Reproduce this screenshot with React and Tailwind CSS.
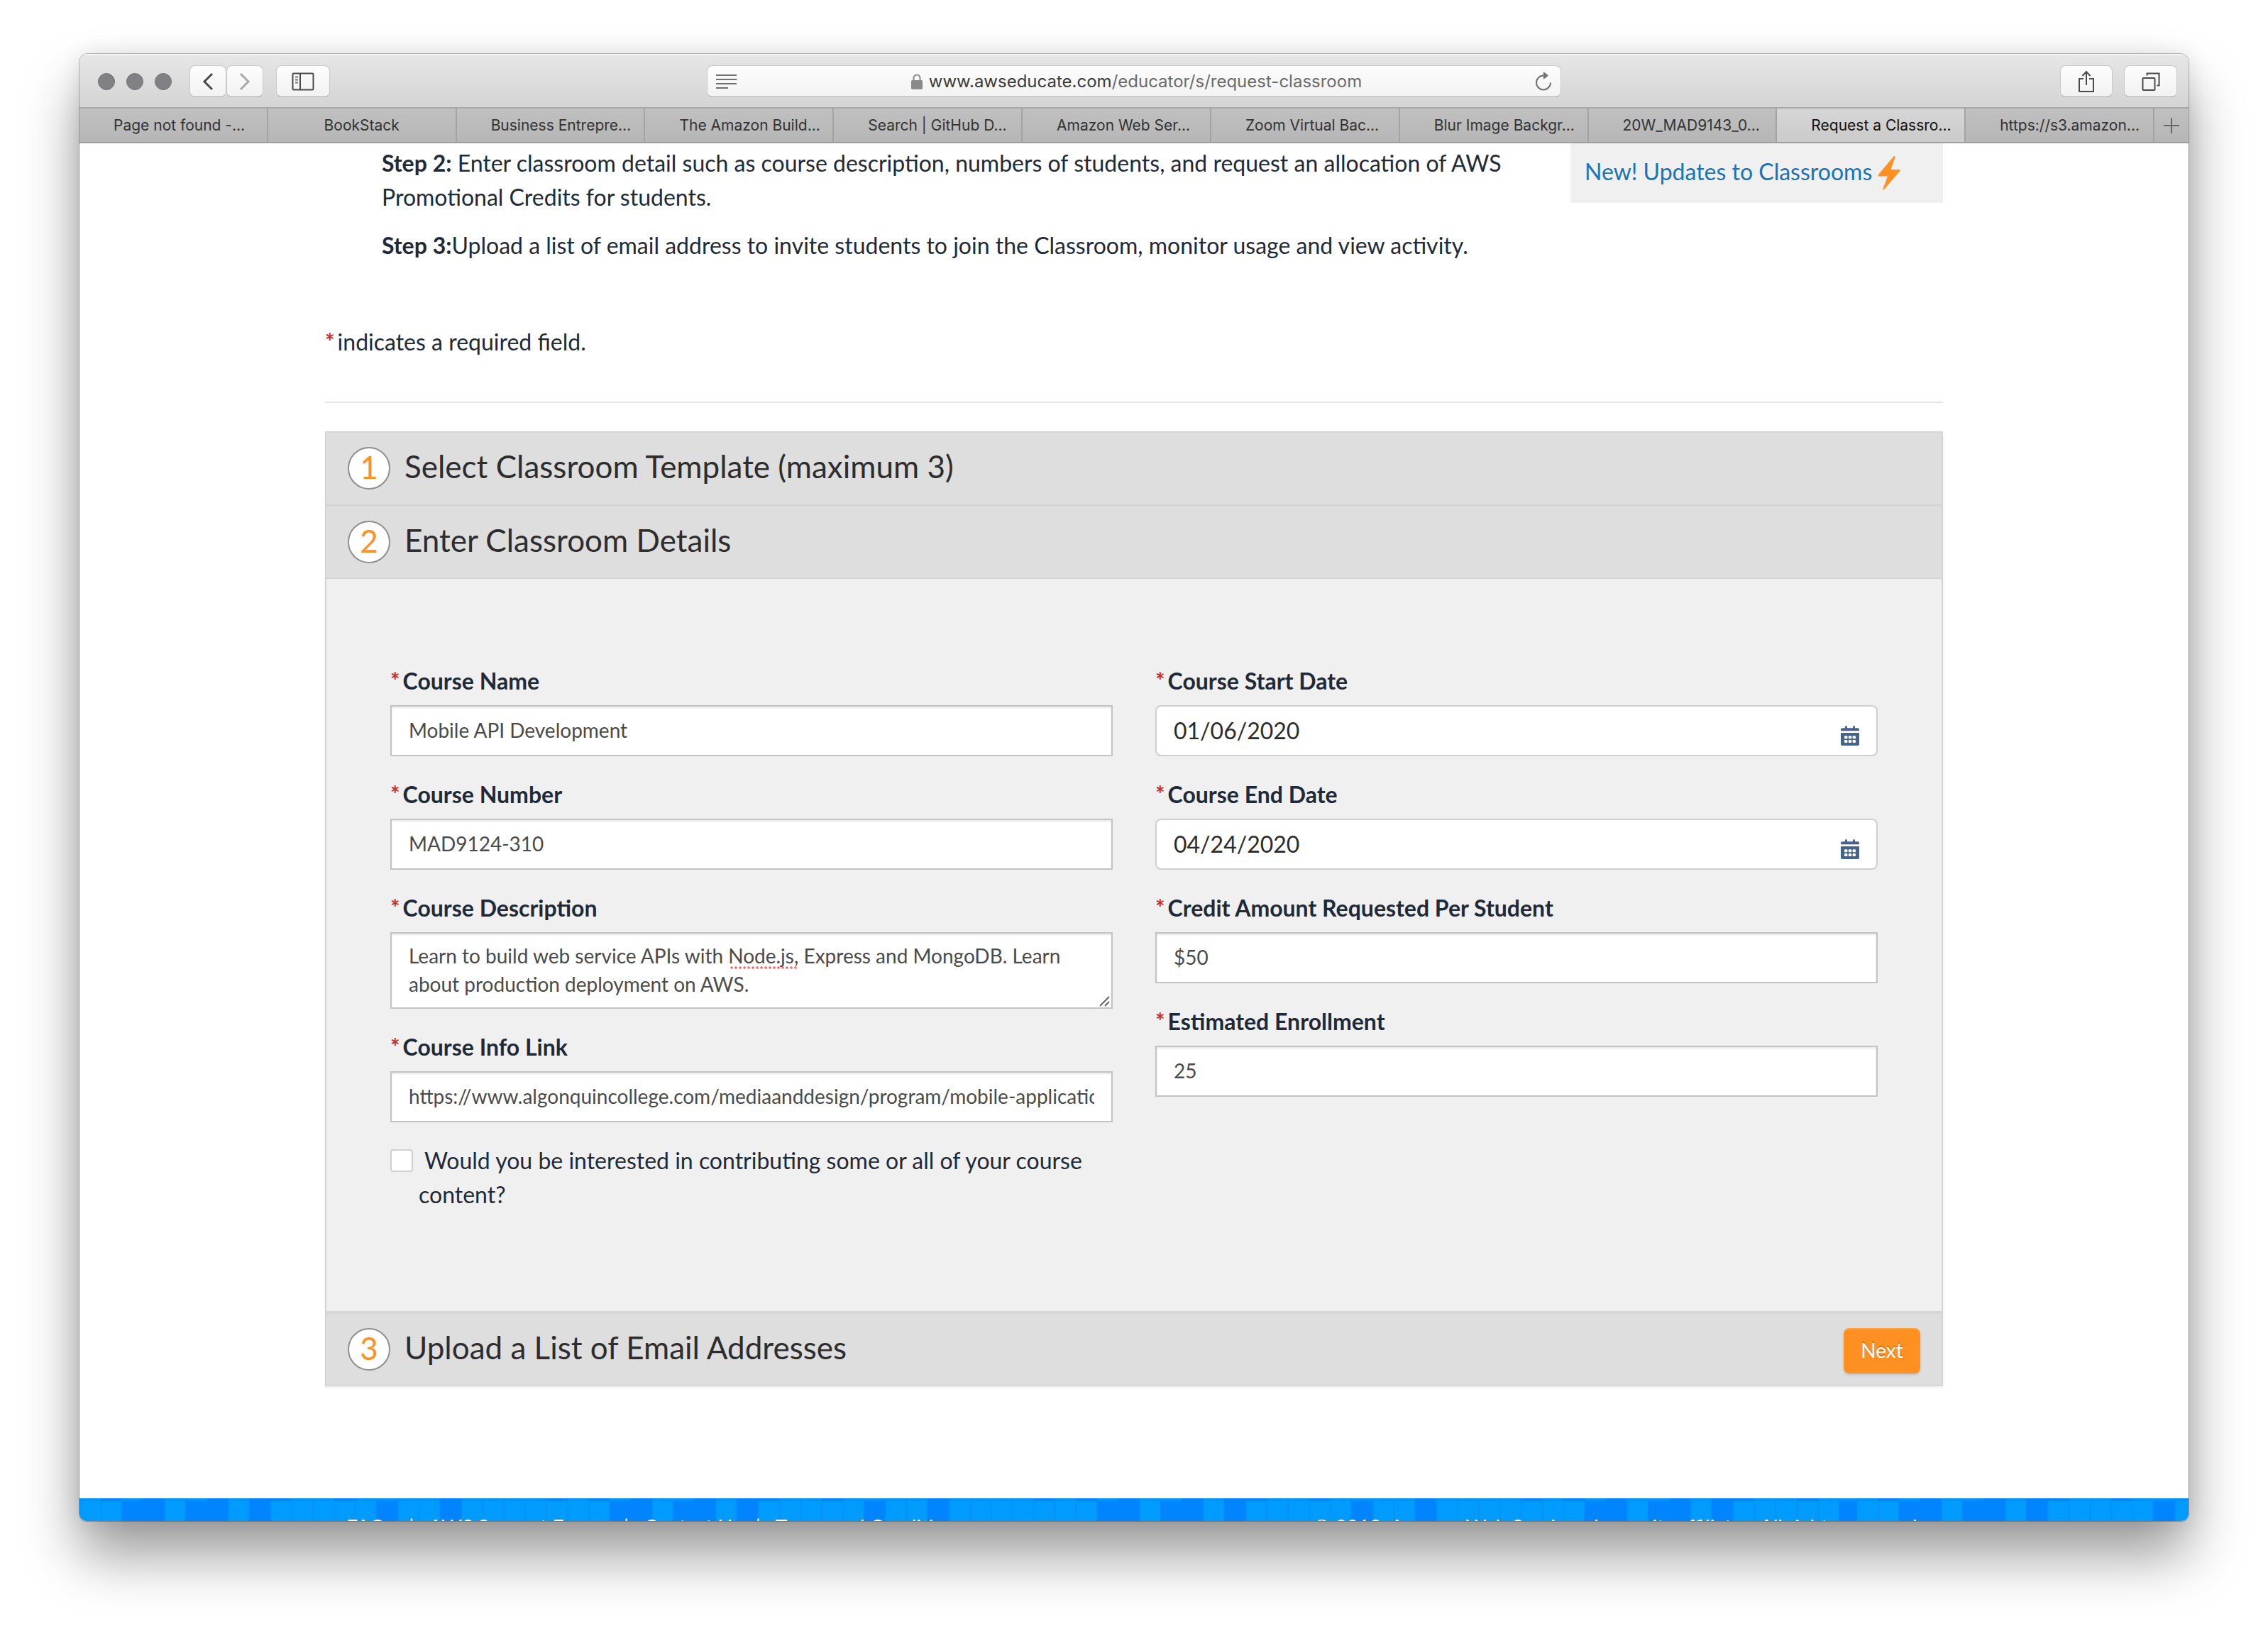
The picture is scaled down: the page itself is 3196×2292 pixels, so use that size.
import React from "react";

const TILE = 29.87;
const STRIP = 2504;
const DARK_TOP = [1, 3, 6, 8, 9, 12, 17, 22];
const DARK = [2, 3, 5, 6, 8, 14, 17];

const TABS = [
  "Page not found -...",
  "BookStack",
  "Business Entrepre...",
  "The Amazon Build...",
  "Search | GitHub D...",
  "Amazon Web Ser...",
  "Zoom Virtual Bac...",
  "Blur Image Backgr...",
  "20W_MAD9143_0...",
  "Request a Classro...",
  "https://s3.amazon...",
];

const toolButton =
  "flex h-[45px] items-center justify-center rounded-lg border border-[#c9c9c9] border-b-[#a6a6a6] bg-linear-to-b from-[#fdfdfd] to-[#f2f2f2]";

function Toolbar() {
  return (
    <div className="grid h-[75px] grid-cols-[1fr_auto_1fr] items-center border-t-2 border-[#f4f4f4] bg-linear-to-b from-[#e6e6e6] to-[#d4d4d4]">
      <div className="flex items-center pl-[26px]">
        <div className="flex gap-4">
          {[0, 1, 2].map((i) => (
            <span key={i} className="size-6 rounded-full border border-[#74747a] bg-[#808085]" />
          ))}
        </div>
        <div className="ml-[25px] flex">
          <button aria-label="Back" className={`${toolButton} w-[52px]`}>
            <svg width="16" height="26" viewBox="0 0 16 26" fill="none" stroke="#4a4a4a" strokeWidth="3">
              <path d="M14 2 3 13l11 11" />
            </svg>
          </button>
          <button aria-label="Forward" className={`${toolButton} w-[52px]`}>
            <svg width="16" height="26" viewBox="0 0 16 26" fill="none" stroke="#a9a9a9" strokeWidth="3">
              <path d="m2 2 11 11L2 24" />
            </svg>
          </button>
        </div>
        <button aria-label="Show sidebar" className={`${toolButton} ml-[18px] w-[76px]`}>
          <svg width="32" height="26" viewBox="0 0 32 26" fill="none" stroke="#4a4a4a" strokeWidth="2">
            <rect x="1.5" y="1.5" width="29" height="23" rx="1.5" />
            <path d="M12 2v22" />
            <path d="M5 6.500h4M5 10.500h4M5 14.500h4" stroke="#777" />
          </svg>
        </button>
      </div>
      <div className="flex h-[45px] w-[1204px] items-center rounded-lg border border-[#c9c9c9] border-b-[#a6a6a6] bg-linear-to-b from-[#fdfdfd] to-[#f3f3f3] px-3">
        <svg width="30" height="22" viewBox="0 0 30 22" stroke="#6f6f6f" strokeWidth="2">
          <path d="M0 2h29M0 8h29M0 14h29M0 20h17" />
        </svg>
        <div className="flex flex-1 items-center justify-center gap-2">
          <svg width="18" height="22" viewBox="0 0 18 22">
            <rect x="1" y="9" width="16" height="13" rx="1.500" fill="#8a8a8a" />
            <path d="M4.500 10V6a4.500 4.500 0 0 1 9 0v4" fill="none" stroke="#8a8a8a" strokeWidth="2" />
          </svg>
          <span className="text-2xl text-[#6b6b6b]">
            <span className="text-[#3b3b3b]">www.awseducate.com</span>/educator/s/request-classroom
          </span>
        </div>
        <button aria-label="Reload">
          <svg width="24" height="28" viewBox="0 0 24 28" fill="none" stroke="#707070" strokeWidth="2">
            <path d="M12 5.500a10 10 0 1 0 10 10" />
            <path d="M12 0v11l7-5.500z" fill="#707070" stroke="none" />
          </svg>
        </button>
      </div>
      <div className="flex justify-end gap-4 pr-4">
        <button aria-label="Share" className={`${toolButton} w-[74px]`}>
          <svg width="26" height="32" viewBox="0 0 26 32" fill="none" stroke="#4a4a4a" strokeWidth="2">
            <path d="M9 12H3v18h20V12h-6" />
            <path d="M13 21V2M7.500 8 13 2l5.500 6" />
          </svg>
        </button>
        <button aria-label="Show all tabs" className={`${toolButton} w-[75px]`}>
          <svg width="26" height="26" viewBox="0 0 26 26" fill="none" stroke="#4a4a4a" strokeWidth="2">
            <rect x="1.500" y="8" width="17" height="17" rx="1" />
            <path d="M7.500 4.500V1.500h17v17h-3" />
          </svg>
        </button>
      </div>
    </div>
  );
}

function TabBar() {
  return (
    <nav className="flex h-[51px] border-y-2 border-t-[#a8a8a8] border-b-[#a0a0a0] bg-linear-to-b from-[#c0c0c0] to-[#b6b6b6] text-[21px] text-[#333]">
      <div className="grid flex-1 grid-cols-11">
        {TABS.map((name) => {
          const place = name === "BookStack" ? "text-center" : "pl-12 text-left";
          const active = name.startsWith("Request") ? "bg-linear-to-b from-[#d6d6d6] to-[#cbcbcb] text-[#111]" : "";
          return (
            <button
              key={name}
              className={`min-w-0 overflow-hidden border-r-2 border-[#a3a3a3] whitespace-nowrap ${place} ${active}`}
            >
              {name}
            </button>
          );
        })}
      </div>
      <button aria-label="New tab" className="flex w-12 items-center justify-center">
        <svg width="22" height="22" viewBox="0 0 22 22" stroke="#666" strokeWidth="2">
          <path d="M11 0v22M0 11h22" />
        </svg>
      </button>
    </nav>
  );
}

function Star() {
  return <span className="mr-1 font-bold text-[#c23030]">*</span>;
}

function Field({ id, label, children }) {
  return (
    <div>
      <label htmlFor={id} className="mb-2.5 block font-bold">
        <Star />
        {label}
      </label>
      {children}
    </div>
  );
}

const box =
  "block w-full border-2 border-[#c3c3c3] bg-white px-6 text-[28px] text-[#4a4a4a] shadow-[inset_0_2px_3px_rgba(0,0,0,0.09)]";

function TextField({ id, label, value }) {
  return (
    <Field id={id} label={label}>
      <input id={id} type="text" defaultValue={value} className={`${box} h-[72px] pb-0.5`} />
    </Field>
  );
}

function DateField({ id, label, value }) {
  return (
    <Field id={id} label={label}>
      <div className="flex h-[72px] items-center rounded-lg border-2 border-[#cfcfcf] bg-white px-6">
        <input id={id} type="text" defaultValue={value} className="min-w-0 flex-1 text-[#2b2b2b] outline-none" />
        <button type="button" aria-label={`Pick ${label}`} className="pt-3.5">
          <svg width="26" height="28" viewBox="0 0 26 28">
            <path
              fill="#48638a"
              d="M2 3.300h4V1.500a1.500 1.500 0 0 1 3 0v1.800h8V1.500a1.500 1.500 0 0 1 3 0v1.800h4a2 2 0 0 1 2 2V7.300H0v-2a2 2 0 0 1 2-2zM0 10h26v16a2 2 0 0 1-2 2H2a2 2 0 0 1-2-2z"
            />
            <g fill="#fff">
              <rect x="5" y="14.300" width="4.400" height="4" rx="1" />
              <rect x="10.800" y="14.300" width="4.400" height="4" rx="1" />
              <rect x="16.600" y="14.300" width="4.400" height="4" rx="1" />
              <rect x="5" y="20" width="4.400" height="4" rx="1" />
              <rect x="10.800" y="20" width="4.400" height="4" rx="1" />
              <rect x="16.600" y="20" width="4.400" height="4" rx="1" />
            </g>
          </svg>
        </button>
      </div>
    </Field>
  );
}

function StepHeader({ number, title, children }) {
  return (
    <div className="flex h-[104px] items-center border-2 border-[#d6d6d6] bg-[#dedede] px-[30px]">
      <span className="flex size-[60px] items-center justify-center rounded-full border-2 border-[#8f8f8f] bg-white pb-1 text-[44px] text-[#ff9123]">
        {number}
      </span>
      <h2 className="ml-5 flex-1 pb-1.5 text-[44px] text-[#2d2d2d]">{title}</h2>
      {children}
    </div>
  );
}

function Divider() {
  return <span className="mx-3.5"> | </span>;
}

function Footer() {
  return (
    <footer className="relative h-8 shrink-0 overflow-hidden font-['Lato',sans-serif] text-[28px] text-white">
      <svg className="absolute inset-0 size-full" aria-hidden="true">
        <defs>
          <pattern id="tiles" width={TILE * 23} height="32" patternUnits="userSpaceOnUse">
            <rect width={TILE * 23} height="32" fill="#009bff" />
            <rect width={TILE * 23} height="4" fill="#0093fc" />
            {Array.from({ length: 23 }, (_, i) => (
              <rect key={i} x={i * TILE} width="1.500" height="32" fill="#008ff5" />
            ))}
            {DARK.map((i) => (
              <rect key={i} x={i * TILE} y="4" width={TILE} height="28" fill="#0084ff" />
            ))}
            {DARK_TOP.map((i) => (
              <rect key={i} x={i * TILE} width={TILE} height="4" fill="#0084ff" />
            ))}
          </pattern>
        </defs>
        <rect width={STRIP} height="100%" fill="url(#tiles)" />
        <svg x={STRIP}>
          <rect width={STRIP} height="100%" fill="url(#tiles)" />
        </svg>
      </svg>
      <div className="relative flex justify-between px-[376px] pt-[19px] whitespace-nowrap">
        <p>
          <a href="#faqs">FAQs</a>
          <Divider />
          <a href="#forum">AWS Support Forum</a>
          <Divider />
          <a href="#contact">Contact Us</a>
          <Divider />
          <a href="#terms">Terms and Conditions</a>
        </p>
        <p>© 2019, Amazon Web Services, Inc. or its affiliates. All rights reserved.</p>
      </div>
    </footer>
  );
}

export default function App() {
  return (
    <div className="min-h-screen bg-white px-28 pt-[76px] pb-[148px] font-['Inter',sans-serif]">
      <div className="flex flex-col overflow-hidden rounded-t-xl rounded-b-[10px] bg-white shadow-[0_0_0_1px_rgba(0,0,0,0.25),0_48px_80px_rgba(0,0,0,0.4),0_0_30px_rgba(0,0,0,0.1)]">
        <Toolbar />
        <TabBar />
        <main className="px-[346px] pb-[158px] font-['Lato',sans-serif] text-[32px] leading-[48px] text-[#1e2a38]">
          <div className="flex items-start justify-between">
            <div className="w-[1690px] pt-1 pl-20">
              <p>
                <b>Step 2:</b> Enter classroom detail such as course description, numbers of students, and request an
                allocation of AWS Promotional Credits for students.
              </p>
              <p className="mt-5">
                <b>Step 3:</b>Upload a list of email address to invite students to join the Classroom, monitor usage and
                view activity.
              </p>
            </div>
            <aside className="flex h-[84px] w-[525px] items-center gap-2 bg-[#f0f0f0] pb-1 pl-5">
              <a href="#updates" className="text-[#1b73b3]">
                New! Updates to Classrooms
              </a>
              <svg width="32" height="48" viewBox="0 0 32 48" className="mt-1">
                <path
                  fill="#ff9123"
                  d="M22.500.6 1 26c-1 1.200-.5 2.500 1 2.500h12L7.500 46c-.4 1.300.8 1.900 1.700.8L31 21.500c1-1.200.5-2.500-1-2.500H18.500L24.500 1.800c.4-1.500-1-2.300-2-1.200z"
                />
              </svg>
            </aside>
          </div>
          <p className="mt-[88px]">
            <Star />
            indicates a required field.
          </p>
          <hr className="mt-[60px] border-t-2 border-[#e6e6e6]" />
          <section className="mt-10 shadow-[0_2px_4px_rgba(0,0,0,0.08)]">
            <StepHeader number="1" title="Select Classroom Template (maximum 3)" />
            <StepHeader number="2" title="Enter Classroom Details" />
            <form className="grid grid-cols-2 items-start gap-[60px] border-x-2 border-b-2 border-[#d6d6d6] bg-[#f0f0f0] px-[90px] pt-[120px] pb-[140px]">
              <div className="flex flex-col gap-[30px]">
                <TextField id="name" label="Course Name" value="Mobile API Development" />
                <TextField id="number" label="Course Number" value="MAD9124-310" />
                <Field id="description" label="Course Description">
                  <div className="relative">
                    <textarea
                      id="description"
                      className={`${box} h-[108px] resize-none py-[11px] leading-10`}
                      defaultValue="Learn to build web service APIs with Node.js, Express and MongoDB. Learn about production deployment on AWS."
                    />
                    <svg
                      className="absolute right-[3px] bottom-[3px]"
                      width="16"
                      height="16"
                      viewBox="0 0 16 16"
                      stroke="#666"
                      strokeWidth="2"
                    >
                      <path d="M1 15 14 2M8 15l6-6" />
                    </svg>
                    <svg className="absolute top-[48px] left-[479px]" width="94" height="4" viewBox="0 0 94 4">
                      <path d="M2 2h91" stroke="#ff5a5a" strokeWidth="3.500" strokeLinecap="round" strokeDasharray="0 6" />
                    </svg>
                  </div>
                </Field>
                <TextField
                  id="link"
                  label="Course Info Link"
                  value="https://www.algonquincollege.com/mediaanddesign/program/mobile-application-design-and-development/"
                />
                <label htmlFor="contribute" className="flex items-start gap-2">
                  <input
                    id="contribute"
                    type="checkbox"
                    className="mt-2 size-8 shrink-0 appearance-none rounded-sm border-2 border-[#cfcfcf] bg-white"
                  />
                  <span className="indent-2">
                    Would you be interested in contributing some or all of your course content?
                  </span>
                </label>
              </div>
              <div className="flex flex-col gap-[30px]">
                <DateField id="start" label="Course Start Date" value="01/06/2020" />
                <DateField id="end" label="Course End Date" value="04/24/2020" />
                <TextField id="credit" label="Credit Amount Requested Per Student" value="$50" />
                <TextField id="enrollment" label="Estimated Enrollment" value="25" />
              </div>
            </form>
            <StepHeader number="3" title="Upload a List of Email Addresses">
              <button className="mt-1 h-16 w-[108px] rounded-lg bg-[#ff9123] pb-0.5 text-[28px] text-white shadow-[0_2px_3px_rgba(0,0,0,0.15),inset_0_2px_0_rgba(255,255,255,0.15)] text-shadow-[0_-2px_0_rgba(0,0,0,0.2)]">
                Next
              </button>
            </StepHeader>
          </section>
        </main>
        <Footer />
      </div>
    </div>
  );
}
